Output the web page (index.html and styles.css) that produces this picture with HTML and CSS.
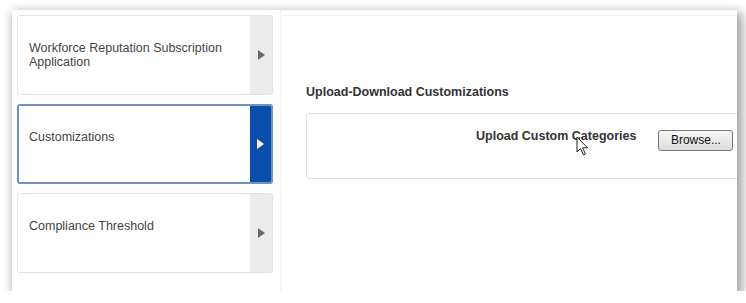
FILE: index.html
```html
<!DOCTYPE html>
<html lang="en">
<head>
    <meta charset="UTF-8">
    <meta name="viewport" content="width=device-width, initial-scale=1.0">
    <title>Customizations</title>
    <link rel="stylesheet" href="styles.css">
</head>
<body>
    <div class="panel">
        <!-- Left navigation -->
        <div class="sidebar">
            <div class="nav-card">
                <div class="nav-label">Workforce Reputation Subscription Application</div>
                <div class="nav-arrow"><span class="tri"></span></div>
            </div>
            <div class="nav-card active">
                <div class="nav-label">Customizations</div>
                <div class="nav-arrow"><span class="tri"></span></div>
            </div>
            <div class="nav-card">
                <div class="nav-label">Compliance Threshold</div>
                <div class="nav-arrow"><span class="tri"></span></div>
            </div>
        </div>

        <!-- Main content -->
        <div class="main">
            <h2 class="section-title">Upload-Download Customizations</h2>
            <div class="upload-box">
                <span class="upload-label">Upload Custom Categories</span>
                <button class="browse-btn">Browse...</button>
                <svg class="cursor" width="14" height="21" viewBox="0 0 14 21">
                    <path d="M1 1 L1 16 L4.5 12.5 L7.5 19 L9.5 18 L6.5 11.8 L11.5 11.8 Z" fill="#fff" stroke="#222" stroke-width="1" stroke-linejoin="round"/>
                </svg>
            </div>
        </div>
    </div>
</body>
</html>
```

FILE: styles.css
```css
body {
    margin: 0;
    background: #ffffff;
    font-family: "Liberation Sans", Arial, sans-serif;
}

.panel {
    display: flex;
    width: 725px;
    height: 281px;
    margin: 10px 0 0 12px;
    background: #ffffff;
    box-shadow: 3px 4px 10px 2px rgba(0, 0, 0, 0.38);
    overflow: hidden;
}

.sidebar {
    flex-shrink: 0;
    width: 256px;
    padding: 5px 7px 0 5px;
    border-right: 1px solid #f0f0f0;
    display: flex;
    flex-direction: column;
    gap: 9px;
}

.nav-card {
    display: flex;
    height: 78px;
    border: 1px solid #e2e2e2;
    border-radius: 3px;
    background: #ffffff;
    overflow: hidden;
}

.nav-label {
    flex: 1;
    padding: 25px 10px 0 11px;
    font-size: 12.5px;
    line-height: 14px;
    color: #444;
}

.nav-arrow {
    width: 22px;
    background: #ececec;
    display: flex;
    align-items: center;
    justify-content: center;
}

.tri {
    width: 0;
    height: 0;
    border-top: 5px solid transparent;
    border-bottom: 5px solid transparent;
    border-left: 7px solid #6a6a6a;
}

.nav-card.active {
    border: 2px solid #6e93bf;
    height: 76px;
}

.nav-card.active .nav-label {
    padding-top: 24px;
    padding-left: 10px;
}

.nav-card.active .nav-arrow {
    width: 21px;
    background: #0b4fae;
}

.nav-card.active .tri {
    border-left-color: #ffffff;
}

.main {
    flex: 1;
    min-width: 0;
    margin-top: 5px;
    border-top: 1px solid #f2f2f2;
    padding: 0 0 0 25px;
    position: relative;
}

.section-title {
    margin: 69px 0 0 0;
    font-size: 12.5px;
    line-height: 14px;
    font-weight: bold;
    color: #333;
}

.upload-box {
    position: relative;
    display: flex;
    align-items: center;
    width: 460px;
    height: 66px;
    margin-top: 14px;
    border: 1px solid #dedede;
    border-radius: 3px;
    padding-bottom: 2px;
    box-sizing: border-box;
}

.upload-label {
    margin-left: 169px;
    margin-bottom: 18px;
    font-size: 12.5px;
    font-weight: bold;
    color: #333;
}

.browse-btn {
    margin-left: 22px;
    margin-bottom: 10px;
    width: 75px;
    height: 21px;
    padding: 0;
    font-family: "Liberation Sans", Arial, sans-serif;
    font-size: 12px;
    color: #111;
    background: linear-gradient(#f6f6f6, #dcdcdc);
    border: 1px solid #777;
    border-radius: 3px;
}

.cursor {
    position: absolute;
    left: 269px;
    top: 22px;
}
```
